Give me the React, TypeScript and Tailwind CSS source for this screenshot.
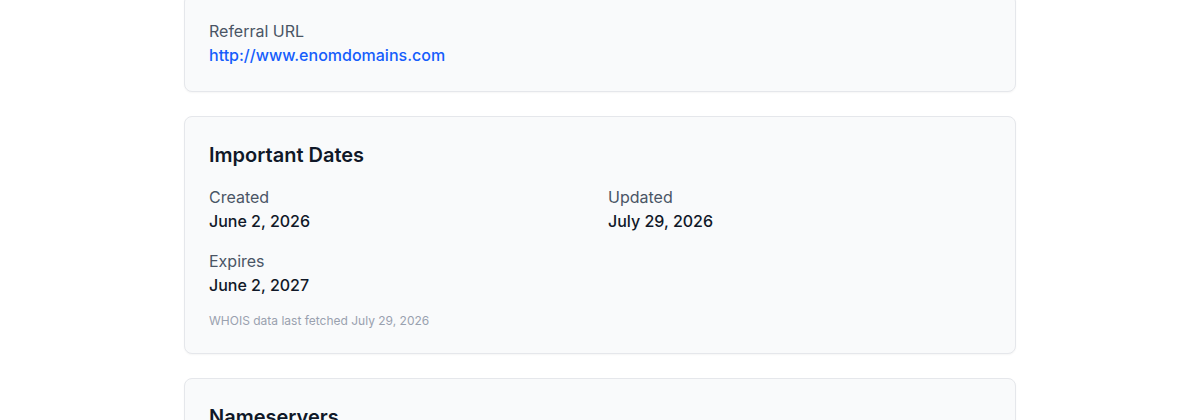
import React from "react";

function Field({ label, value, href }: { label: string; value: string; href?: string }) {
  return (
    <div>
      <div className="text-base leading-6 text-gray-600">{label}</div>
      {href ? (
        <a href={href} className="text-base font-medium leading-6 text-blue-600">
          {value}
        </a>
      ) : (
        <div className="text-base font-medium leading-6 text-gray-900">{value}</div>
      )}
    </div>
  );
}

function Card({ title, children, className = "" }: { title?: string; children: React.ReactNode; className?: string }) {
  return (
    <section
      className={`rounded-lg border border-gray-200 bg-gray-50 p-6 shadow-[0_1px_2px_rgba(0,0,0,0.04)] ${className}`}
    >
      {title && <h2 className="mb-4 text-xl font-semibold leading-7 text-gray-900">{title}</h2>}
      {children}
    </section>
  );
}

export default function App() {
  return (
    <div
      className="h-[420px] overflow-hidden bg-white"
      style={{ fontFamily: "Inter, 'Noto Sans', sans-serif" }}
    >
      <div className="mx-auto -mt-[6px] flex w-[832px] flex-col gap-6">
        <Card>
          <Field label="Referral URL" value="http://www.enomdomains.com" href="http://www.enomdomains.com" />
        </Card>

        <Card title="Important Dates">
          <div className="grid grid-cols-2 gap-4">
            <Field label="Created" value="June 2, 2026" />
            <Field label="Updated" value="July 29, 2026" />
            <Field label="Expires" value="June 2, 2027" />
          </div>
          <p className="mt-4 text-xs leading-4 text-gray-400">WHOIS data last fetched July 29, 2026</p>
        </Card>

        <Card title="Nameservers">
          <ul className="space-y-2 text-base text-gray-900">
            <li>dns1.name-services.com</li>
            <li>dns2.name-services.com</li>
          </ul>
        </Card>
      </div>
    </div>
  );
}
